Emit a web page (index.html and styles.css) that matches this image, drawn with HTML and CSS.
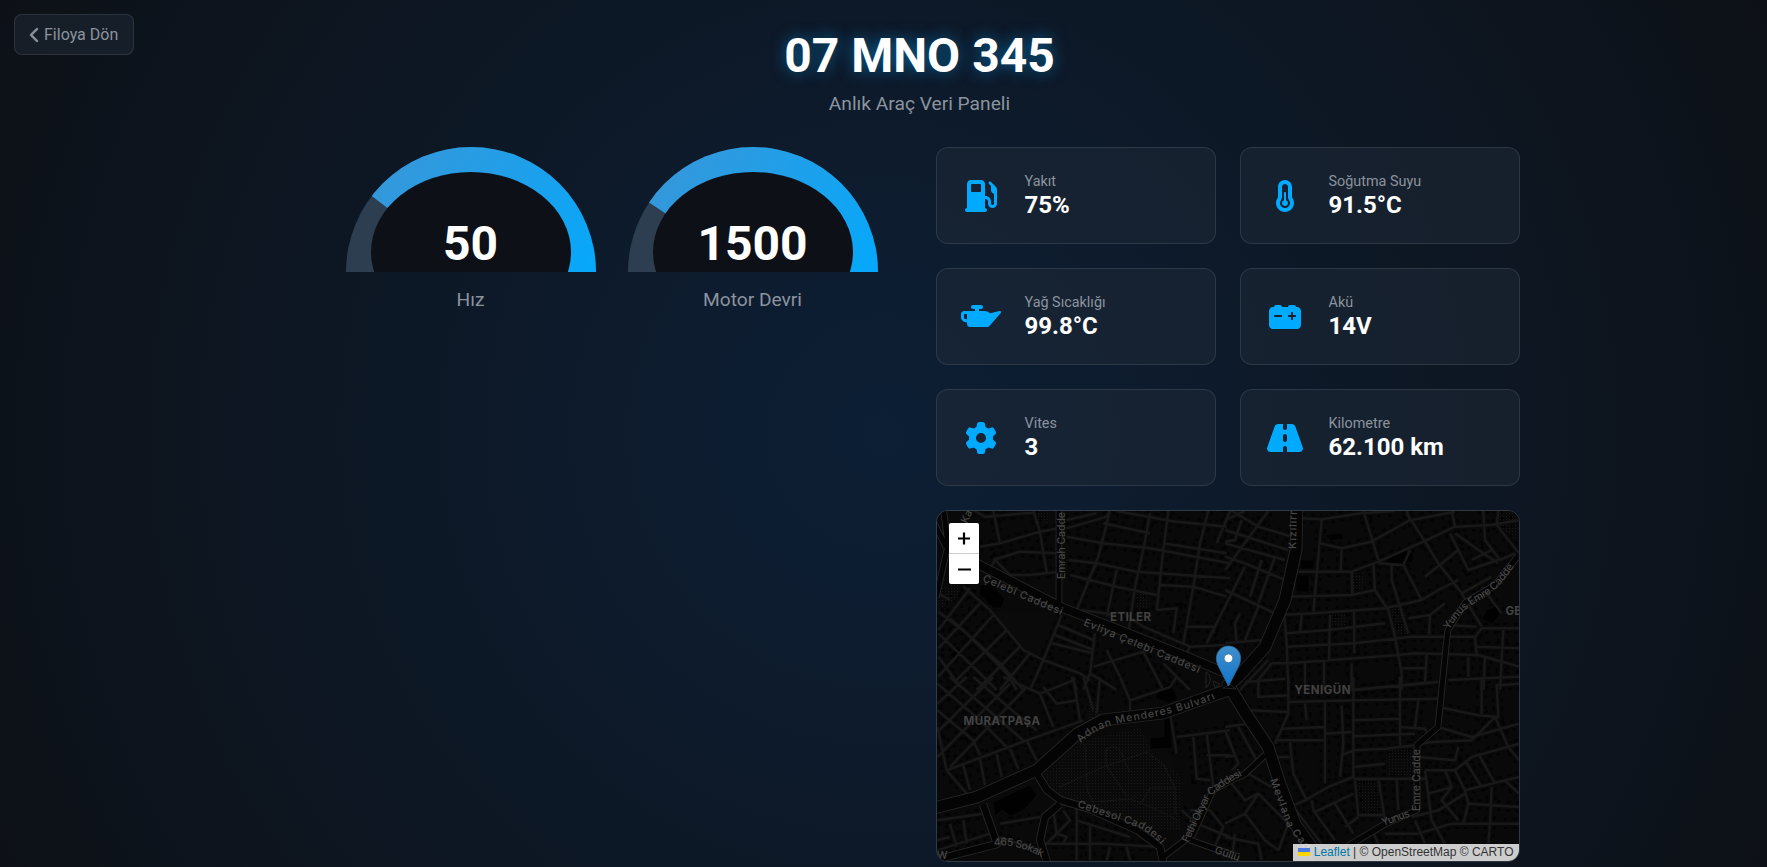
FILE: index.html
```html
<!DOCTYPE html>
<html lang="tr">
<head>
<meta charset="utf-8">
<title>07 MNO 345</title>
<link rel="stylesheet" href="styles.css">
</head>
<body>
<a class="back"><svg class="back-icon" viewBox="0 0 320 512"><path d="M9.400 233.400c-12.500 12.500-12.500 32.800 0 45.300l192 192c12.500 12.500 32.800 12.500 45.300 0s12.500-32.800 0-45.300L77.300 256 246.600 86.600c12.500-12.500 12.500-32.800 0-45.300s-32.800-12.500-45.300 0l-192 192z"/></svg>Filoya Dön</a>
<div class="dashboard">
  <header class="header">
    <h1 class="plate">07 MNO 345</h1>
    <p class="subtitle">Anlık Araç Veri Paneli</p>
  </header>
  <main class="content">
    <section class="gauges">
      <div class="gauge">
        <div class="dial">
          <svg class="dial-art" viewBox="0 0 250 125">
            <defs>
              <linearGradient id="fill" gradientUnits="userSpaceOnUse" x1="25.800" y1="48.900" x2="224.200" y2="201"><stop offset="0" stop-color="#3498db"/><stop offset="1" stop-color="#0af"/></linearGradient>
              <linearGradient id="fill2" gradientUnits="userSpaceOnUse" x1="21" y1="55.600" x2="229" y2="194.400"><stop offset="0" stop-color="#3498db"/><stop offset="1" stop-color="#0af"/></linearGradient>
              <clipPath id="arc"><path d="M0 125A125 125 0 0 1 250 125Z"/></clipPath>
            </defs>
            <g clip-path="url(#arc)">
              <path fill="#2c3e50" d="M0 0H250V125H0Z"/>
              <path fill="url(#fill)" d="M125 125L-38 0H250V125Z"/>
              <ellipse cx="125" cy="105" rx="100" ry="80" fill="#0d1117"/>
            </g>
          </svg>
          <span class="dial-value">50</span>
        </div>
        <div class="gauge-label">Hız</div>
      </div>
      <div class="gauge">
        <div class="dial">
          <svg class="dial-art" viewBox="0 0 250 125">
            <g clip-path="url(#arc)">
              <path fill="#2c3e50" d="M0 0H250V125H0Z"/>
              <path fill="url(#fill2)" d="M125 125L-62 0H250V125Z"/>
              <ellipse cx="125" cy="105" rx="100" ry="80" fill="#0d1117"/>
            </g>
          </svg>
          <span class="dial-value">1500</span>
        </div>
        <div class="gauge-label">Motor Devri</div>
      </div>
    </section>
    <section class="details">
      <div class="stats">
        <div class="card">
          <svg class="icon" viewBox="-64 0 640 512"><path d="M32 64C32 28.700 60.700 0 96 0H256c35.300 0 64 28.700 64 64V256h8c48.600 0 88 39.400 88 88v32c0 13.300 10.700 24 24 24s24-10.700 24-24V222c-27.600-7.100-48-32.200-48-62V96L384 64c-8.800-8.800-8.800-23.200 0-32s23.200-8.800 32 0l77.300 77.300c12 12 18.700 28.300 18.700 45.300V376c0 39.800-32.200 72-72 72s-72-32.200-72-72V344c0-22.100-17.900-40-40-40h-8V448c17.700 0 32 14.300 32 32s-14.300 32-32 32H32c-17.700 0-32-14.300-32-32s14.300-32 32-32V64zM96 80v96c0 8.800 7.200 16 16 16H240c8.800 0 16-7.200 16-16V80c0-8.800-7.200-16-16-16H112c-8.800 0-16 7.200-16 16z" fill-rule="evenodd"/></svg>
          <div class="card-text"><div class="card-label">Yakıt</div><div class="card-value">75%</div></div>
        </div>
        <div class="card">
          <svg class="icon" viewBox="-160 0 640 512"><path fill-rule="evenodd" d="M160 64c-26.500 0-48 21.500-48 48V276.500c0 17.300-7.100 31.900-15.300 42.500C86.200 332.600 80 349.500 80 368c0 44.200 35.800 80 80 80s80-35.800 80-80c0-18.500-6.200-35.400-16.700-48.900c-8.200-10.600-15.300-25.200-15.300-42.500V112c0-26.500-21.500-48-48-48zM48 112C48 50.200 98.100 0 160 0s112 50.100 112 112V276.500c0 .1 .1 .3 .2 .6c.2 .6 .8 1.600 1.700 2.800c18.900 24.400 30.100 55 30.100 88.100c0 79.500-64.500 144-144 144S16 447.500 16 368c0-33.200 11.200-63.800 30.100-88.100c.9-1.200 1.500-2.200 1.700-2.800c.1-.3 .2-.5 .2-.6V112zM208 368c0 26.500-21.500 48-48 48s-48-21.500-48-48c0-20.900 13.400-38.700 32-45.300V208c0-8.800 7.200-16 16-16s16 7.200 16 16V322.700c18.600 6.600 32 24.400 32 45.300z"/></svg>
          <div class="card-text"><div class="card-label">Soğutma Suyu</div><div class="card-value">91.5°C</div></div>
        </div>
        <div class="card">
          <svg class="icon" viewBox="0 0 640 512"><path fill-rule="evenodd" d="M192 64H320a32 32 0 0 1 0 64H288v32h92c13 0 26 3 38 9l54 27L613 161c24-7 36 20 20 34L454 400c-6 10-18 16-31 16H144c-26 0-48-21-48-48v-26L57 334c-33-6-57-35-57-69V208c0-26 21-48 48-48h176v-32h-32a32 32 0 0 1 0-64zM96 208H48v57c0 10 7 20 18 22l30 6z"/></svg>
          <div class="card-text"><div class="card-label">Yağ Sıcaklığı</div><div class="card-value">99.8°C</div></div>
        </div>
        <div class="card">
          <svg class="icon" viewBox="-64 0 640 512"><path d="M80 96c0-17.700 14.300-32 32-32h64c17.700 0 32 14.300 32 32l96 0c0-17.700 14.300-32 32-32h64c17.700 0 32 14.300 32 32h16c35.300 0 64 28.700 64 64V384c0 35.300-28.700 64-64 64H64c-35.300 0-64-28.700-64-64V160c0-35.300 28.700-64 64-64l16 0zm304 96c0-8.800-7.200-16-16-16s-16 7.200-16 16v32H320c-8.800 0-16 7.200-16 16s7.200 16 16 16h32v32c0 8.800 7.200 16 16 16s16-7.200 16-16V256h32c8.800 0 16-7.200 16-16s-7.200-16-16-16H384V192zM80 240c0 8.800 7.200 16 16 16h96c8.800 0 16-7.200 16-16s-7.200-16-16-16H96c-8.800 0-16 7.200-16 16z" fill-rule="evenodd"/></svg>
          <div class="card-text"><div class="card-label">Akü</div><div class="card-value">14V</div></div>
        </div>
        <div class="card">
          <svg class="icon" viewBox="-64 0 640 512"><path fill-rule="evenodd" d="M495.900 166.600c3.200 8.700 .5 18.400-6.400 24.600l-43.300 39.400c1.100 8.300 1.700 16.800 1.700 25.400s-.6 17.100-1.700 25.400l43.300 39.400c6.900 6.200 9.600 15.900 6.400 24.600c-4.400 11.900-9.700 23.300-15.800 34.300l-4.700 8.100c-6.600 11-14 21.400-22.100 31.200c-5.900 7.200-15.700 9.600-24.500 6.800l-55.700-17.700c-13.400 10.300-28.200 18.900-44 25.400l-12.500 57.100c-2 9.100-9 16.300-18.200 17.800c-13.800 2.300-28 3.500-42.500 3.500s-28.700-1.200-42.500-3.500c-9.200-1.500-16.200-8.700-18.200-17.800l-12.500-57.100c-15.800-6.500-30.600-15.100-44-25.400L83.100 425.900c-8.800 2.800-18.600 .3-24.500-6.800c-8.100-9.800-15.500-20.200-22.100-31.200l-4.700-8.100c-6.100-11-11.400-22.400-15.800-34.300c-3.200-8.700-.5-18.400 6.400-24.600l43.300-39.400C64.600 273.100 64 264.600 64 256s.6-17.100 1.700-25.400L22.400 191.200c-6.900-6.200-9.600-15.900-6.400-24.600c4.400-11.900 9.700-23.300 15.800-34.300l4.700-8.100c6.600-11 14-21.400 22.100-31.200c5.900-7.200 15.700-9.600 24.500-6.800l55.700 17.700c13.400-10.300 28.200-18.900 44-25.400l12.500-57.100c2-9.100 9-16.300 18.200-17.800C227.300 1.200 241.500 0 256 0s28.700 1.200 42.500 3.500c9.200 1.500 16.200 8.700 18.200 17.800l12.500 57.100c15.800 6.500 30.600 15.100 44 25.400l55.700-17.700c8.800-2.800 18.600-.3 24.500 6.800c8.100 9.800 15.500 20.200 22.100 31.200l4.700 8.100c6.100 11 11.400 22.400 15.800 34.300zM256 336a80 80 0 1 0 0-160 80 80 0 1 0 0 160z"/></svg>
          <div class="card-text"><div class="card-label">Vites</div><div class="card-value">3</div></div>
        </div>
        <div class="card">
          <svg class="icon" viewBox="-32 0 640 512"><path fill-rule="evenodd" d="M256 32H181.200c-27.100 0-51.300 17.100-60.300 42.600L3.100 407.200C1.100 413 0 419.200 0 425.400C0 455.500 24.500 480 54.600 480H256V416c0-17.700 14.300-32 32-32s32 14.300 32 32v64H521.400c30.200 0 54.600-24.500 54.600-54.600c0-6.200-1.100-12.400-3.100-18.200L455.100 74.600C446 49.100 421.900 32 394.800 32H320V96c0 17.700-14.300 32-32 32s-32-14.300-32-32V32zm64 192v64c0 17.700-14.300 32-32 32s-32-14.300-32-32V224c0-17.700 14.300-32 32-32s32 14.300 32 32z"/></svg>
          <div class="card-text"><div class="card-label">Kilometre</div><div class="card-value">62.100 km</div></div>
        </div>
      </div>
      <div class="map">
        <svg class="map-art" viewBox="937 511 582 350">
          <defs>
            <pattern id="dots" width="3" height="3" patternUnits="userSpaceOnUse"><path d="M0 0h1v1h-1z" fill="#191919"/></pattern>
            <g id="minor">
              <path transform="translate(930 500) scale(.33333)" d="M133 33L165 50L310 38M190 33L210 130M150 140L210 130L330 95L385 85M310 33L330 95L340 160L350 215M190 180L270 155L385 160M180 205L195 180L240 225L300 225L385 215M410 85L530 50L540 33M410 110L520 130L660 145L900 190M415 180L500 190L620 215L900 235M540 33L505 170L440 330M660 40L640 150L615 260L595 400M715 33L700 150L680 330M835 33L810 130L790 260L760 430M520 70L660 100M410 60L500 40M715 62L890 80M700 130L890 160M690 255L790 260L890 290M560 33L720 62M420 225L560 260L680 285M455 330L560 345M500 190L470 250M560 210L530 350M680 330L740 325L730 400M590 345L640 380L780 440L885 435M770 380L850 380L850 400M900 33L860 130M830 430L870 350L900 290M385 375L490 420M375 405L490 450M365 430L490 460M395 345L340 480L300 570M100 260L180 330L280 450L340 480L450 520L480 540M120 265L25 390M150 310L25 445M190 345L25 530M230 390L80 540M270 440L140 570M300 460L210 570M25 335L110 400L230 520L260 570M60 300L25 280M60 355L210 490L280 570M25 400L150 520L200 570M25 470L90 560M495 400L480 520M530 450L570 530M490 500L640 455L700 570M700 490L780 570M480 520L560 570M425 530L440 570M480 520L460 570M780 440L760 480"/>
              <path transform="translate(1225 500) scale(.33333)" d="M60 33L0 60M130 33L0 210M50 60L30 120L0 125M0 20L100 80L200 110M0 90L190 150M0 130L180 180M0 170L60 190L180 240M0 270L150 340M60 200L10 300M110 180L75 290M150 170L100 310M0 430L110 420M45 340L30 370L35 430M60 420L100 320M290 60L265 335M230 55L290 58L410 40L510 33M285 130L350 145L440 125L555 60L545 33M350 145L347 215M220 215L380 215L460 185L595 125L690 80L800 75L882 60M415 33L460 180M545 40L600 125L640 190L710 280L770 380M380 215L382 285M190 290L380 285L450 270M445 190L450 270L490 330L510 410L530 520L530 570M160 345L265 340L480 325L590 300L640 270L700 240M500 195L500 240L550 400M460 190L535 195L590 300M535 195L555 150M600 230L700 150M560 60L690 35M690 100L760 150L820 190M675 100L730 210L820 180M680 33L690 80M775 33L780 120L825 180L870 160M820 33L815 75L882 160M710 280L800 230M740 180L800 150M770 260L830 340M175 310L185 430L190 570M230 345L225 400M185 400L310 390L480 370M550 355L615 345L660 310M615 345L612 405M185 440L390 430L560 410L750 410L770 385L882 385M190 490L520 465L570 460L760 465L882 500M315 345L312 480M387 335L388 460M670 375L755 380M750 410L755 470M755 440L882 445M835 390L825 570M605 465L600 550M530 505L605 505M670 540L882 530M730 470L730 530M780 470L775 570M380 490L380 570L640 545M240 490L240 570M297 485L297 570M190 490L140 490L100 540L100 570M45 570L130 480"/>
              <path transform="translate(1225 677) scale(.33333)" d="M60 15L180 5M100 10L100 60L190 55M190 0L190 110L150 200M190 75L390 70L640 65M70 100L190 105M0 150L70 140M240 80L245 130M300 75L300 320M170 155L300 150M150 190L300 190M380 40L640 15M385 0L385 300L310 330L240 370L205 385M525 0L525 205M380 130L525 125M300 170L380 165M385 178L570 170M525 150L600 155L610 175M580 70L570 150M350 85L355 200L345 300M350 235L385 220L480 215L570 205M385 270L480 260M385 305L600 305M195 195L205 290L245 370M150 240L195 240M460 305L480 430M390 310L400 415L480 415M515 305L520 400M260 370L265 400L330 490M270 405L385 350M330 380L385 470M360 450L400 420M640 90L760 115L820 120L815 20M820 25L882 20M770 0L770 110M640 150L740 180L882 140M590 200L620 195L740 190L780 150L810 120M580 240L690 250L700 210M600 280L690 280L740 240L882 200M660 280L680 330L610 350M690 280L720 340L882 300M720 250L770 330M760 230L810 320M810 120L850 210L882 250M600 280L620 430L660 500M680 330L650 370L700 430M560 420L640 400L720 350M580 470L680 440L882 440M800 330L795 440L790 500M730 380L882 390M720 340L730 380L715 440M570 430L600 500M480 470L580 470M440 455L460 500M840 310L882 350M0 160L40 260L20 280M40 150L100 260M0 240L30 235M70 290L140 330M100 350L60 410L0 440M20 320L60 370L100 350L190 440L160 520M60 410L120 490L160 520M0 480L100 500L110 550M30 470L20 550M205 390L290 500"/>
              <path transform="translate(930 677) scale(.33333)" d="M22 80L110 0M22 165L190 0M22 240L240 20M60 270L290 30M22 20L150 130L230 210M60 0L280 190M130 0L270 120L320 160M220 0L330 50L370 150M22 100L130 190L150 235M22 150L50 280L290 190L460 130M330 50L430 10M50 280L110 350M100 265L120 340M150 245L165 325M200 230L215 300M240 215L265 275M290 190L320 250M340 30L380 80L440 70M600 70L720 30L740 0M460 0L490 100M510 0L500 110M600 110L600 70L570 0M720 110L740 230M740 180L900 160M790 180L800 305L840 310M830 170L850 330M830 235L900 235M430 0L450 130M440 390L440 550M440 430L600 480M340 500L520 500L690 510M370 400L380 470L350 500M380 470L420 430L400 400M400 500L410 480L380 470M480 440L480 550M540 510L530 550M590 510L600 550M22 430L160 410M60 440L80 510M22 490L60 480M100 430L110 500M22 520L180 470M210 440L330 420M205 480L330 520M755 400L800 440L900 480M850 520L880 450L840 400L780 400"/>
            </g>
            <g id="major">
              <path class="w9" d="M970 560L1063 608L1130 634L1190 658L1228 674"/>
              <path class="w5" d="M1059 505V604M1518 556L1495 585L1465 603L1448 630L1446 647L1438 727L1417 745L1417 810L1385 824L1348 846M1265 755L1245 774L1230 781L1213 790L1193 834L1163 857M1190 840L1235 856"/>
              <path class="w5" d="M943 505L948 545L936 598M930 515L946 547"/>
              <path class="w7" d="M1037 774L1047 790L1060 800L1090 809L1137 830L1160 847L1163 862M983 804L997 844L935 860M1060 804L1045 817L1040 840L1047 862"/>
              <path class="w11" d="M1297 500L1296 550L1285 600L1265 647L1238 677L1228 685L1248 717L1268 747L1280 784L1295 824L1322 862"/>
              <path class="w11" d="M934 808L977 797L1037 770L1077 734L1103 720L1163 713L1228 690"/>
            </g>
            <path id="r1" d="M982 581L1070 619"/><path id="r2" d="M1083 625L1210 678"/>
            <path id="r3" d="M1065 579V505"/><path id="r4" d="M1296 549L1297 500"/>
            <path id="r5" d="M1449 630Q1460 610 1482 599Q1503 587 1520 556"/>
            <path id="r6" d="M1081 743Q1095 727 1130 721Q1180 714 1222 696"/>
            <path id="r7" d="M1077 807L1140 828Q1158 838 1168 854"/>
            <path id="r8" d="M1188 843L1210 797Q1223 784 1258 768"/>
            <path id="r9" d="M1270 780L1287 826Q1300 845 1318 865"/>
            <path id="r10" d="M1383 826L1411 816"/><path id="r13" d="M1420 811V740"/>
            <path id="r11" d="M994 846Q1018 842 1050 862"/><path id="r12" d="M1214 853L1255 867"/>
          </defs>
          <path fill="#090909" d="M930 505h600v362h-600z"/>
          <use href="#minor" fill="none" stroke="#030303" stroke-width="32" stroke-dasharray="9 18 13 15 8 24"/>
          <use href="#minor" fill="none" stroke="#090909" stroke-width="18"/>
          <path fill="#0a0a0a" d="M985 610L1058 612L1038 660L1005 632ZM1042 772L1080 740L1140 728L1175 760L1180 830L1150 832L1060 798Z"/>
          <path fill="url(#dots)" d="M1042 776L1085 740L1140 728L1155 758L1180 775L1180 830L1150 832L1060 798zM1352 570l12 2v18h-12zM1388 610l16-3l5 27l-15 2zM1332 615h14v12h-14zM1357 780h20l5 34h-20zM1387 750l26-4v30h-26zM1500 512h18v30l-18-15zM1135 594h12v14h-12zM1035 512h14v12h-14zM938 590l20-8v14l-20 16zM1088 700h11v18h-11z"/>
          <g fill="#010101" stroke="#131313" stroke-width=".5">
            <path d="M980 585l11-2 14 16-4 9-8 0-14-14zM993 802l37-17 7 10-12 14-14 7-9-6-7 6zM1150 738l14-1v-24l6 2 2 33-22 1zM1158 690l12-8 8 17-10 4-13-5zM1385 562l15-13 14 5-2 8-12 3zM1296 575h13v17h-13zM1325 535l16-2 3 6-14 2zM1486 610l10-4 4 9-8 9-10-5zM950 655l8-9 5 7-8 7zM1300 560h14v9h-14zM1141 608h9v5h-9z"/>
          </g>
          <use href="#minor" fill="none" stroke="#181818" stroke-width="7.500" stroke-linejoin="round"/>
          <g fill="none" stroke="#1e1e1e" stroke-width="1" stroke-dasharray="1.500 1"><path d="M1060 787L1103 767L1147 752M1106 750Q1118 740 1125 762L1130 772M1085 743L1087 790L1093 802L1130 799Q1160 810 1177 820M1147 752L1163 764L1175 787V814M1106 750V765L1127 797M1142 802L1150 788H1175"/></g>
          <use class="casing" href="#major"/>
          <use class="road" href="#major"/>
          <path fill="none" stroke="#2a2a2a" stroke-width=".8" d="M1206 672q9 6 0 16zM1213 681l7 3-5 4zM1223 688l7-4 6 5z"/>
          <g class="street">
            <text><textPath textLength="86" href="#r1">Çelebi Caddesi</textPath></text>
            <text><textPath textLength="125" href="#r2">Evliya Çelebi Caddesi</textPath></text>
            <text><textPath textLength="67" href="#r3">Emrah Cadde</textPath></text>
            <text><textPath textLength="38" href="#r4">Kızılırr</textPath></text>
            <text><textPath textLength="92" href="#r5">Yunus Emre Cadde</textPath></text>
            <text><textPath textLength="143" href="#r6">Adnan Menderes Bulvarı</textPath></text>
            <text><textPath textLength="93" href="#r7">Cebesol Caddesi</textPath></text>
            <text><textPath textLength="90" href="#r8">Fethi Okyar Caddesi</textPath></text>
            <text><textPath textLength="80" href="#r9">Mevlana Cad</textPath></text>
            <text><textPath textLength="29" href="#r10">Yunus</textPath></text>
            <text><textPath textLength="62" href="#r13">Emre Cadde</textPath></text>
            <text><textPath textLength="50" href="#r11">465 Sokak</textPath></text>
            <text><textPath href="#r12">Güllü</textPath></text>
            <text transform="translate(967 524) rotate(-65)">Ka</text>
            <text x="937" y="859">W</text>
          </g>
          <g class="district">
            <text x="1110" y="621" textLength="41">ETILER</text>
            <text x="963.500" y="724.500" textLength="76.500">MURATPAŞA</text>
            <text x="1294.500" y="693.500" textLength="56">YENIGÜN</text>
            <text x="1505.500" y="614.500">GE</text>
          </g>
          <defs><linearGradient id="pin" x2="0" y2="1"><stop stop-color="#3f8fca"/><stop offset="1" stop-color="#1273cc"/></linearGradient></defs>
          <path fill="url(#pin)" stroke="#2e6c97" stroke-width=".8" d="M1228.500 646C1221.500 646 1216.400 651.500 1216.400 658.300C1216.400 662 1217.500 664.500 1219 667.500L1228.500 686L1238 667.500C1239.500 664.500 1240.600 662 1240.600 658.300C1240.600 651.500 1235.500 646 1228.500 646Z"/>
          <circle cx="1228.500" cy="658.300" r="4.300" fill="#fff" stroke="#2e6c97" stroke-width=".7"/>
        </svg>
        <div class="zoom"><span class="zoom-btn"><svg class="sign" viewBox="0 0 30 30"><path d="M9 15.500h12M15 9.500v12"/></svg></span><span class="zoom-btn"><svg class="sign" viewBox="0 0 30 30"><path d="M9 15.500h13"/></svg></span></div>
        <div class="attribution"><svg class="flag" viewBox="0 0 12 8"><path fill="#4c7be1" d="M0 0h12v4H0z"/><path fill="#ffd500" d="M0 4h12v4H0z"/></svg><a class="link">Leaflet</a> | © OpenStreetMap © CARTO</div>
      </div>
    </section>
  </main>
</div>
</body>
</html>
```
FILE: styles.css
```css
* { box-sizing: border-box; }
html, body { height: 100%; }
body {
  margin: 0;
  overflow: hidden;
  font-family: Roboto, "Liberation Sans", sans-serif;
  color: #fff;
  background: #0d1117 radial-gradient(circle at 50% 50%, #0d1f35 0%, #0d1117 100%);
}
.back {
  position: absolute;
  left: 14px;
  top: 14px;
  width: 120px;
  height: 41px;
  display: flex;
  align-items: center;
  gap: 4px;
  padding-left: 15px;
  border: 1px solid rgba(255, 255, 255, .1);
  border-radius: 8px;
  background: rgba(31, 41, 55, .5);
  color: #8b949e;
  font-size: 16px;
}
.back-icon { width: 10px; height: 16px; fill: currentColor; stroke: currentColor; stroke-width: 14px; overflow: visible; }
.dashboard { width: 1200px; margin-left: 319.500px; padding-top: 28px; }
.header { text-align: center; }
.plate {
  margin: 0;
  font-size: 48px;
  line-height: 56px;
  font-weight: 700;
  text-shadow: 0 0 15px rgba(0, 170, 255, .5);
}
.subtitle { margin: 8px 0 0; font-size: 19.2px; line-height: 24px; color: #8b949e; }
.content { display: flex; justify-content: space-between; margin-top: 31px; }
.gauges { display: flex; gap: 32px; padding-left: 26px; }
.gauge { width: 250px; }
.dial { display: grid; height: 125px; }
.dial-art { grid-area: 1 / 1; width: 250px; height: 125px; display: block; }
.dial-value {
  grid-area: 1 / 1;
  align-self: end;
  text-align: center;
  font-size: 48px;
  font-weight: 700;
  line-height: 56px;
}
.gauge-label { margin-top: 16px; text-align: center; font-size: 19.2px; line-height: 23px; color: #8b949e; }
.details { width: 584px; }
.stats { display: grid; grid-template-columns: 280px 280px; gap: 24px; }
.card {
  height: 97px;
  display: flex;
  align-items: center;
  gap: 24px;
  padding: 0 24px;
  border: 1px solid rgba(255, 255, 255, .1);
  border-radius: 12px;
  background: rgba(31, 41, 55, .5);
}
.icon { width: 40px; height: 32px; flex: none; fill: #0af; }
.card-text { padding-bottom: 1px; }
.card-label { font-size: 14.4px; line-height: 19px; color: #8b949e; }
.card-value { font-size: 24px; line-height: 28px; font-weight: 700; }
.map {
  position: relative;
  height: 352px;
  margin-top: 24px;
  overflow: hidden;
  border: 1px solid rgba(255, 255, 255, .15);
  border-radius: 12px;
}
.map-art { display: block; width: 582px; height: 350px; }
.casing { --edge: 1.8px; fill: none; stroke: #262626; stroke-linejoin: round; }
.road { --edge: 0px; fill: none; stroke: #040404; stroke-linejoin: round; }
.w5 { stroke-width: calc(5px + var(--edge)); }
.w7 { stroke-width: calc(6.5px + var(--edge)); }
.w9 { stroke-width: calc(8px + var(--edge)); }
.w11 { stroke-width: calc(11px + var(--edge)); }
.street { font: 500 10.500px Inter, sans-serif; fill: #464646; }
.district { font: 700 11.500px Inter, sans-serif; fill: #424242; }
.zoom {
  position: absolute;
  left: 12px;
  top: 12px;
  width: 30px;
  border-radius: 2px;
  overflow: hidden;
  background: #fff;
}
.zoom-btn { display: block; height: 30px; }
.zoom-btn + .zoom-btn { height: 31px; border-top: 1px solid #ccc; }
.sign { display: block; width: 30px; height: 30px; fill: none; stroke: #000; stroke-width: 2.2px; }
.attribution {
  position: absolute;
  right: 0;
  bottom: 0;
  padding: 0 5px;
  font: 12px/17px "Liberation Sans", sans-serif;
  color: #333;
  background: rgba(255, 255, 255, .8);
  white-space: nowrap;
}
.flag { width: 12px; height: 8px; margin-right: 4px; }
.link { color: #0078a8; }
```
